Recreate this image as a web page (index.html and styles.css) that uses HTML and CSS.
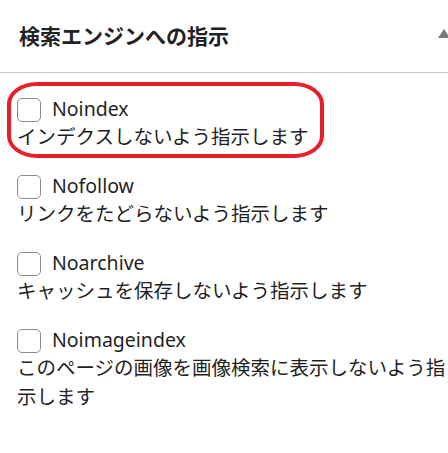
FILE: index.html
```html
<!DOCTYPE html>
<html lang="ja">
<head>
  <meta charset="UTF-8">
  <title>検索エンジンへの指示</title>
  <link rel="stylesheet" href="styles.css">
</head>
<body>
  <div class="panel">
    <div class="panel-head">
      <h2 class="panel-title">検索エンジンへの指示</h2>
      <span class="toggle"></span>
    </div>

    <ul class="options">
      <li class="option marked">
        <label class="option-row"><input type="checkbox"> <span>Noindex</span></label>
        <p class="option-desc">インデクスしないよう指示します</p>
      </li>
      <li class="option">
        <label class="option-row"><input type="checkbox"> <span>Nofollow</span></label>
        <p class="option-desc">リンクをたどらないよう指示します</p>
      </li>
      <li class="option">
        <label class="option-row"><input type="checkbox"> <span>Noarchive</span></label>
        <p class="option-desc">キャッシュを保存しないよう指示します</p>
      </li>
      <li class="option">
        <label class="option-row"><input type="checkbox"> <span>Noimageindex</span></label>
        <p class="option-desc">このページの画像を画像検索に表示しないよう指示します</p>
      </li>
    </ul>
  </div>
</body>
</html>
```

FILE: styles.css
```css
html, body {
  overflow: hidden;
}

body {
  margin: 0;
  background-color: white;
  color: #1f1f1f;
  font-family: "Noto Sans", "Noto Sans CJK JP", sans-serif;
}

.panel {
  width: 462px;
}

.panel-head {
  display: flex;
  justify-content: space-between;
  align-items: center;
  height: 72px;
  padding: 0 12px 0 19px;
  border-bottom: 1px solid #c8c8c8;
}

.panel-title {
  margin: 0 0 2px 0;
  font-family: "Noto Sans CJK JP", sans-serif;
  font-size: 21px;
  font-weight: bold;
  color: #222;
}

.toggle {
  width: 0;
  height: 0;
  margin-bottom: 6px;
  border-left: 6px solid transparent;
  border-right: 6px solid transparent;
  border-bottom: 9px solid #7a7a7a;
}

.options {
  list-style: none;
  margin: 0;
  padding: 25px 0 0 0;
}

.option {
  position: relative;
  padding-left: 17px;
  margin-bottom: 24px;
}

/* red annotation round the first option */
.option.marked::after {
  content: "";
  position: absolute;
  left: 7px;
  top: -16px;
  width: 309px;
  height: 68px;
  border: 4px solid #e61f28;
  border-radius: 30px / 22px;
}

.option-row {
  display: flex;
  align-items: center;
  gap: 11px;
  height: 24px;
  font-size: 19.5px;
}

.option-row span {
  margin-top: -4px;
}

.option-row input {
  appearance: none;
  width: 24px;
  height: 24px;
  margin: 0;
  border: 1px solid #8c8c8c;
  border-radius: 5px;
  background-color: white;
}

.option-desc {
  margin: 0;
  font-size: 19.5px;
  line-height: 29px;
}
```
